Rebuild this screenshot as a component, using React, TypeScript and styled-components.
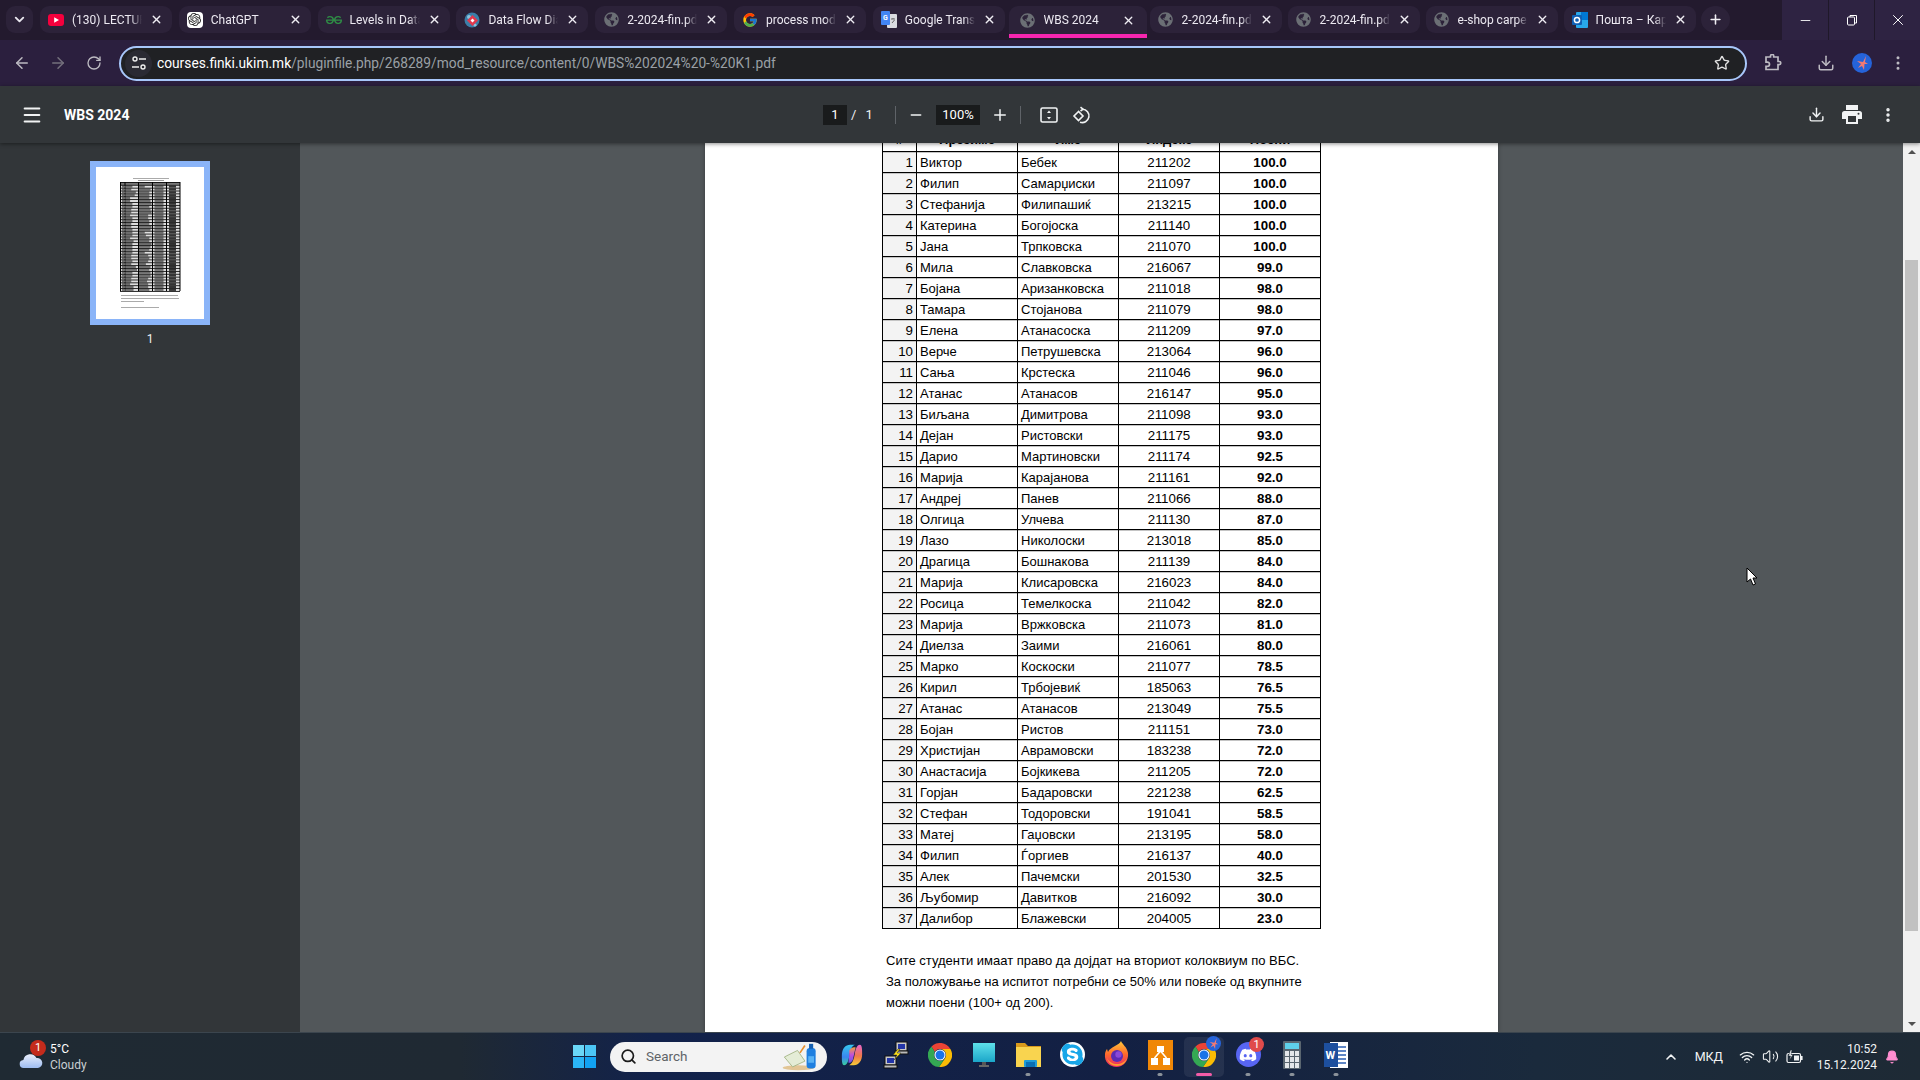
import React from "react";
import styled, { createGlobalStyle } from "styled-components";
import {
  ArrowLeft, ArrowRight, RotateCw, Star, Download, MoreVertical, Menu, Minus, Plus,
  ChevronDown, ChevronUp, X, Search, Wifi, Volume2, Bell,
} from "lucide-react";
import { SiOpenai, SiGeeksforgeeks } from "react-icons/si";
import { FaGlobeAmericas, FaDiscord, FaSkype } from "react-icons/fa";
import { FcGoogle } from "react-icons/fc";

const GlobalStyle = createGlobalStyle`
  html, body { margin: 0; padding: 0; width: 1920px; height: 1080px; overflow: hidden; background: #231a2e; }
  * { box-sizing: border-box; }
  #root { width: 1920px; height: 1080px; }
`;

const UI = `Roboto, "Noto Sans", sans-serif`;

const Shell = styled.div`
  position: relative; width: 1920px; height: 1080px; display: flex; flex-direction: column;
  font-family: ${UI}; overflow: hidden;
`;

/* ---------- tab strip ---------- */
const TabStrip = styled.div`
  height: 40px; flex: none; display: flex; align-items: flex-start; background: #231a2e; padding: 6px 0 0 6px;
`;
const TabMenu = styled.div`
  width: 27px; height: 27px; margin-right: 7px; border-radius: 9px; background: #2c2239; color: #e8e6ee;
  display: flex; align-items: center; justify-content: center;
`;
const TabList = styled.div`display: flex; gap: 6.8px;`;
const Tab = styled.div<{ $active?: boolean }>`
  width: ${p => (p.$active ? "138px" : "132px")}; height: ${p => (p.$active ? "32px" : "27px")};
  margin: ${p => (p.$active ? "0 -3px" : "0")};
  border-radius: ${p => (p.$active ? "9px 9px 0 0" : "9px")};
  background: #2c2239; color: #ece9f1;
  border-bottom: ${p => (p.$active ? "4px solid #f626af" : "none")};
  display: flex; align-items: center; padding: ${p => (p.$active ? "0 12px 0 11px" : "0 9px 0 8px")}; gap: 8px; font-size: 12px;
  &:nth-child(n+9) { margin-left: -0.8px; }
`;
const Fav = styled.span`
  width: 16px; height: 16px; flex: none; display: flex; align-items: center; justify-content: center;
`;
const TabTitle = styled.span`
  flex: 1; min-width: 0; overflow: hidden; white-space: nowrap;
  -webkit-mask-image: linear-gradient(90deg, #000 84%, transparent 100%);
`;
const TabClose = styled(X)`flex: none; color: #f0eef4;`;
const NewTab = styled.div`
  width: 29px; height: 27px; margin-left: 5px; border-radius: 50%; background: #2c2239; color: #f0eef4;
  display: flex; align-items: center; justify-content: center;
`;
const WindowControls = styled.div`
  margin: -6px 0 0 auto; display: flex; height: 40px; background: #2e2342;
`;
const WinBtn = styled.div<{ $sep?: boolean }>`
  width: 46px; height: 40px; display: flex; align-items: center; justify-content: center; color: #fff;
  border-left: ${p => (p.$sep ? "1px solid #1f1829" : "none")};
`;

/* ---------- address bar ---------- */
const Toolbar = styled.div`
  height: 46px; flex: none; display: flex; align-items: center; padding-left: 4px; background: #2b1f3e; color: #c7c7c7;
`;
const ToolBtn = styled.div<{ $dim?: boolean; $gapLeft?: number }>`
  width: 36px; height: 36px; flex: none; display: flex; align-items: center; justify-content: center;
  color: ${p => (p.$dim ? "#74707c" : "#bdbbc2")};
  margin-left: ${p => p.$gapLeft ?? 0}px;
`;
const UrlBar = styled.div`
  width: 1628px; height: 35px; margin-left: 7px; flex: none; background: #202124; border: 2px solid #a8c7fa; border-radius: 18px;
  display: flex; align-items: center; padding: 0 15px 0 4px; font-size: 13.75px;
`;
const SiteChip = styled.div`
  width: 27px; height: 27px; border-radius: 50%; background: #2a2a33; color: #eee; display: flex; align-items: center; justify-content: center; flex: none;
`;
const UrlText = styled.div`margin-left: 5px; flex: 1; color: #9aa0a6; white-space: nowrap;`;
const UrlHost = styled.span`color: #fff;`;
const Avatar = styled.div<{ $s?: number }>`
  width: ${p => p.$s ?? 20}px; height: ${p => p.$s ?? 20}px; border-radius: 50%; background: #2563d9; display: flex; align-items: center; justify-content: center;
`;

/* ---------- pdf toolbar ---------- */
const PdfBar = styled.div`
  height: 57px; flex: none; position: relative; z-index: 2; display: grid; grid-template-columns: 1fr auto 1fr; align-items: center;
  background: #323639; color: #f1f3f4; box-shadow: 0 1px 4px rgba(0,0,0,.45);
`;
const PdfLeft = styled.div`display: flex; align-items: center; gap: 21px; padding-left: 21px;`;
const PdfTitle = styled.div`font-size: 14px; font-weight: 700; color: #fff; padding-top: 1px;`;
const PdfCenter = styled.div`display: flex; align-items: center; font-size: 13px;`;
const PdfInput = styled.div<{ $w: number }>`
  width: ${p => p.$w}px; height: 20px; background: #191b1c; display: flex; align-items: center; justify-content: center; color: #fff;
`;
const PageOf = styled.div`display: flex; gap: 9px; width: 48px; padding-left: 4px; color: #f1f3f4;`;
const Sep = styled.div`width: 1px; height: 18px; background: #5f6368; flex: none;`;
const PdfBtn = styled.div<{ $w?: number }>`
  width: ${p => p.$w ?? 32}px; height: 32px; flex: none; display: flex; align-items: center; justify-content: center; color: #f1f3f4;
`;
const GapFix = styled.div<{ $w: number }>`width: ${p => p.$w}px; flex: none;`;
const PdfRight = styled.div`display: flex; justify-content: flex-end; align-items: center; padding-right: 14px;`;

/* ---------- main ---------- */
const Main = styled.div`height: 889px; flex: none; display: flex; overflow: hidden;`;
const Sidebar = styled.div`
  width: 300px; flex: none; background: #323639; display: flex; flex-direction: column; align-items: center; padding-top: 18px;
`;
const Thumb = styled.div`width: 120px; height: 164px; border: 6px solid #8ab4f8; background: #fff; flex: none;`;
const ThumbNum = styled.div`margin-top: 7px; font-size: 12px; line-height: 14px; color: #eef0f2;`;
const Viewer = styled.div`
  flex: 1; min-width: 0; background: #52575a; display: flex; justify-content: center; overflow: hidden;
`;
const Page = styled.div`
  width: 793px; height: 889px; flex: none; background: #fff; overflow: hidden; padding-left: 177px;
  font-family: "Liberation Sans", Arial, sans-serif; color: #000; font-size: 13.33px;
  box-shadow: 0 0 4px rgba(0,0,0,.35);
`;
const Sheet = styled.table`
  width: 438px; margin-top: -13px; border-collapse: collapse; table-layout: fixed; border: 1px solid #000;
`;
const HCell = styled.th`
  height: 21px; padding: 0 0 3px; border: 1px solid #000; text-align: center; font-weight: 700; background: #fff; font-size: 13px;
`;
const Cell = styled.td<{ $kind: "num" | "name" | "idx" | "pts" }>`
  height: 21px; padding: 1px 3px 0; border: 1px solid #000; line-height: 19px; white-space: nowrap; overflow: hidden;
  box-shadow: inset 0 1px 0 #c4c4c4;
  text-align: ${p => (p.$kind === "num" ? "right" : p.$kind === "name" ? "left" : "center")};
  font-weight: ${p => (p.$kind === "pts" ? 700 : 400)};
  font-size: ${p => (p.$kind === "name" ? "13px" : "13.33px")};
  background: ${p => (p.$kind === "num" ? "#f3f3f3" : "#fff")};
`;
const Note = styled.div`margin: 21px 0 0 4px; line-height: 21px; white-space: nowrap; font-size: 13px;`;
const Scrollbar = styled.div`
  width: 17px; flex: none; background: #f1f1f1; display: flex; flex-direction: column; align-items: center;
`;
const ScrollArrow = styled.div<{ $down?: boolean }>`
  width: 17px; height: 17px; flex: none; display: flex; align-items: center; justify-content: center;
  margin-top: ${p => (p.$down ? "auto" : "0")};
  &::after {
    content: ""; border-left: 4px solid transparent; border-right: 4px solid transparent;
    ${p => (p.$down ? "border-top: 4px solid #505050;" : "border-bottom: 4px solid #505050;")}
  }
`;
const ScrollThumb = styled.div`width: 13px; height: 671px; margin-top: 100px; background: #c1c1c1; flex: none;`;

/* ---------- taskbar ---------- */
const Taskbar = styled.div`
  height: 48px; flex: none; display: flex; align-items: center; padding-left: 19px; color: #fff;
  border-top: 1px solid #3b454e;
  background: linear-gradient(90deg, #1f2a33 0%, #1f2933 24%, #12224b 34%, #132043 58%, #1a2a3c 80%, #1e2a35 100%);
`;
const Weather = styled.div`width: 554px; flex: none; display: flex; align-items: center; gap: 7px;`;
const WeatherIcon = styled.div`position: relative; width: 24px; height: 24px; flex: none; display: flex; align-items: flex-end;`;
const Badge = styled.span`
  position: absolute; right: -3px; top: -5px; width: 16px; height: 16px; border-radius: 50%; background: #c42b1c; color: #fff;
  font-size: 11px; line-height: 16px; text-align: center;
`;
const WeatherText = styled.div`font-size: 12px; line-height: 16px;`;
const WeatherSub = styled.div`color: #c9ced2;`;
const StartBtn = styled.div`
  width: 23px; height: 23px; flex: none; margin-right: 14px; display: grid; grid-template-columns: 1fr 1fr; gap: 1px;
`;
const StartPane = styled.span<{ $c: string }>`background: ${p => p.$c};`;
const SearchBox = styled.div`
  width: 217px; height: 30px; flex: none; margin-right: 3px; background: #f3f3f3; border-radius: 15px; display: flex; align-items: center;
  padding: 0 5px 2px 10px; color: #5f6468; font-size: 13.5px; gap: 9px;
`;
const SearchIcon = styled(Search)`color: #1b1b1b; flex: none; margin-top: 2px;`;
const SearchArt = styled.svg`margin-left: auto; flex: none; margin-top: 2px;`;
const TaskIcon = styled.div<{ $active?: boolean }>`
  position: relative; width: 44px; height: 40px; flex: none; display: flex; align-items: center; justify-content: center;
  &::before {
    content: ""; position: absolute; left: 2px; right: 2px; top: 0; bottom: 0; border-radius: 5px;
    background: ${p => (p.$active ? "rgba(255,255,255,.07)" : "transparent")};
  }
`;
const TaskGlyph = styled.div`position: relative; width: 26px; height: 26px; display: flex; align-items: center; justify-content: center; margin-top: -4px;`;
const RunDot = styled.span<{ $active?: boolean }>`
  position: absolute; bottom: 1px; left: 50%; transform: translateX(-50%); height: 3px; border-radius: 2px;
  width: ${p => (p.$active ? "16px" : "5px")}; background: ${p => (p.$active ? "#f45ca8" : "#8b929a")};
`;
const MiniBadge = styled.span`
  position: absolute; right: -3px; top: -5px; width: 15px; height: 15px; border-radius: 50%; background: #e04b4b; color: #fff;
  font-size: 11px; line-height: 15px; text-align: center;
`;
const ProfileBadge = styled.span`position: absolute; right: -4px; top: -6px;`;
const Tray = styled.div`flex: 1; display: flex; align-items: center; justify-content: flex-end; padding-right: 21px; font-size: 12px; color: #f2f4f5;`;
const TrayLang = styled.div`margin: 0 16px 0 16px; font-size: 12.5px;`;
const TrayIcons = styled.div`display: flex; align-items: center; gap: 7px;`;
const Clock = styled.div`width: 74px; margin-right: 8px; text-align: right; line-height: 16px; font-size: 12px;`;
const BellIcon = styled(Bell)`flex: none; color: #ff8dd0; fill: #ff8dd0;`;
const Cursor = styled.svg`position: absolute; left: 1746px; top: 567px; z-index: 5;`;

/* ---------- drawings ---------- */
const Chrome = ({ s = 16 }: { s?: number }) => (
  <svg width={s} height={s} viewBox="0 0 24 24">
    <path d="M3.5 3.5A12 12 0 0 1 22.39 6H12a6 6 0 0 0-5.2 3z" fill="#ea4335" />
    <path d="M22.39 6A12 12 0 0 1 11 24l6.2-9A6 6 0 0 0 12 6z" fill="#fbbc04" />
    <path d="M3.5 3.5A12 12 0 0 0 11 24l6.2-9a6 6 0 0 1-10.4-6z" fill="#34a853" />
    <circle cx="12" cy="12" r="5.6" fill="#fff" />
    <circle cx="12" cy="12" r="4.5" fill="#1a73e8" />
  </svg>
);
const Globe = () => <FaGlobeAmericas size={15} color="#6b6f75" />;
const YouTube = () => (
  <svg width="16" height="12" viewBox="0 0 16 12"><rect width="16" height="12" rx="3" fill="#f5003d" /><path d="M6.2 3.3 11 6 6.2 8.7z" fill="#fff" /></svg>
);
const GptIcon = () => (
  <span style={{ width: 16, height: 16, background: "#fff", borderRadius: 4, display: "flex", alignItems: "center", justifyContent: "center" }}>
    <SiOpenai size={13} color="#222" />
  </span>
);
const DataFlow = () => (
  <svg width="16" height="16" viewBox="0 0 16 16">
    <circle cx="8" cy="8" r="7.5" fill="#3b7ea8" />
    <circle cx="5" cy="5" r="2" fill="#8cc3de" /><circle cx="11" cy="13" r="1.6" fill="#8cc3de" />
    <path d="M8.5 3 14 8.5 8.5 14 3 8.5z" fill="#e2384d" /><path d="M8.5 6.5 10.5 8.5 8.5 10.5 6.5 8.5z" fill="#fff" />
  </svg>
);
const Translate = () => (
  <svg width="16" height="18" viewBox="0 0 16 18">
    <rect x="6" y="3" width="10" height="14" rx="1" fill="#dadce0" />
    <rect x="0" y="0" width="9" height="14" rx="1" fill="#4285f4" />
    <text x="2" y="9" fontSize="7" fontWeight="700" fill="#fff" fontFamily="Roboto">G</text>
    <path d="M10 8h4M12 7v1M11 12l2.5-3" stroke="#666" fill="none" />
  </svg>
);
const Outlook = ({ s = 16 }: { s?: number }) => (
  <svg width={s} height={s} viewBox="0 0 16 16">
    <rect x="4" y="0" width="12" height="16" rx="1" fill="#28a8ea" />
    <rect x="9" y="0" width="7" height="8" fill="#0078d4" />
    <rect x="0" y="3" width="10" height="10" rx="1" fill="#0f5fb3" />
    <circle cx="5" cy="8" r="2.6" fill="none" stroke="#fff" strokeWidth="1.5" />
  </svg>
);
const Tune = () => (
  <svg width="16" height="16" viewBox="0 0 16 16" fill="none" stroke="#eee" strokeWidth="1.4">
    <circle cx="4" cy="4" r="2" /><path d="M8 4h7M1 12h7" /><circle cx="12" cy="12" r="2" />
  </svg>
);
const Extension = () => (
  <svg width="18" height="18" viewBox="0 0 18 18" fill="none" stroke="#bdbbc2" strokeWidth="1.7">
    <path d="M2 3h4.5V2a1.6 1.6 0 0 1 3.2 0v1H14v4.5h1.2a1.6 1.6 0 0 1 0 3.2H14V15.5H2v-3.2h1.4a2 2 0 0 0 0-4.2H2z" />
  </svg>
);
const Butterfly = ({ s = 14 }: { s?: number }) => (
  <svg width={s} height={s} viewBox="0 0 14 14">
    <path d="M11 0 8 6 2 5l4 3-3 4 4-2 2 4 .5-6L13 8 10 6z" fill="#f47a72" />
  </svg>
);
const FitIcon = () => (
  <svg width="18" height="18" viewBox="0 0 18 18" fill="none">
    <rect x="1" y="2" width="16" height="14" rx="1.5" stroke="#f1f3f4" strokeWidth="1.6" />
    <path d="M9 4.5 11 7H7zM9 13.5 7 11h4z" fill="#f1f3f4" />
  </svg>
);
const RotateIcon = () => (
  <svg width="20" height="20" viewBox="0 0 20 20" fill="none" stroke="#f1f3f4" strokeWidth="1.6">
    <path d="M9.5 2.2 12 4.2 9.5 6" /><path d="M11.5 4.2a6.7 6.7 0 1 1-2.5 13" />
    <path d="M7.5 6.5 3 11l4.5 4.5L12 11z" />
  </svg>
);
const PrintIcon = () => (
  <svg width="20" height="19" viewBox="0 0 20 19">
    <rect x="4" y="0" width="12" height="5" fill="#f1f3f4" />
    <path d="M2.5 6h15A2.5 2.5 0 0 1 20 8.5V14h-4v5H4v-5H0V8.5A2.5 2.5 0 0 1 2.5 6z" fill="#f1f3f4" />
    <rect x="6" y="11" width="8" height="6" fill="#323639" />
    <circle cx="16.5" cy="8.8" r="1" fill="#323639" />
  </svg>
);
const BatteryIcon = () => (
  <svg width="17" height="14" viewBox="0 0 17 14" fill="none">
    <rect x="1" y="3.5" width="13.5" height="9" rx="1.5" stroke="#f2f4f5" strokeWidth="1.2" />
    <rect x="8" y="5.5" width="5" height="5" fill="#f2f4f5" />
    <rect x="15" y="6" width="1.6" height="4" fill="#f2f4f5" />
    <path d="M4.5 0 2.5 6h2l-1 4 3.5-5.5H5L6 0z" fill="#f2f4f5" stroke="#1e2a35" strokeWidth=".5" />
  </svg>
);
const Cloud = () => (
  <svg width="24" height="18" viewBox="0 0 24 18">
    <defs><linearGradient id="cl" x1="0" y1="0" x2="0" y2="1"><stop offset="0" stopColor="#e9eefb" /><stop offset="1" stopColor="#9dbcf0" /></linearGradient></defs>
    <path d="M5 17a4 4 0 0 1-.6-8A7 7 0 0 1 17.5 7 5 5 0 0 1 19 17z" fill="url(#cl)" />
  </svg>
);
const SearchPicture = () => (
  <SearchArt width="44" height="28" viewBox="0 0 44 34">
    <ellipse cx="20" cy="30" rx="19" ry="3" fill="#e2c595" />
    <path d="M3 17 19 9l9 13-15 7z" fill="#e4ecd6" stroke="#9db07e" />
    <path d="M22 12 28 3" stroke="#e8902e" strokeWidth="2" />
    <rect x="30" y="6" width="11" height="25" rx="4" fill="#1f7fe0" />
    <rect x="33" y="1" width="5" height="6" fill="#155fb0" />
    <rect x="32" y="16" width="7" height="8" fill="#59b2f5" />
  </SearchArt>
);
const Copilot = () => (
  <svg width="24" height="24" viewBox="0 0 26 26">
    <defs>
      <linearGradient id="c1" x1="0" y1="0" x2="0" y2="1"><stop offset="0" stopColor="#35c7ee" /><stop offset=".6" stopColor="#3a86f0" /><stop offset="1" stopColor="#39d0a0" /></linearGradient>
      <linearGradient id="c2" x1="0" y1="0" x2="0" y2="1"><stop offset="0" stopColor="#e765c9" /><stop offset=".55" stopColor="#f0784a" /><stop offset="1" stopColor="#f5c938" /></linearGradient>
      <linearGradient id="c3" x1="0" y1="0" x2="0" y2="1"><stop offset="0" stopColor="#f0a03a" /><stop offset=".5" stopColor="#c04fdc" /><stop offset="1" stopColor="#6a52e8" /></linearGradient>
    </defs>
    <path d="M2 14C2 6 6 2 11 2h5c-4 2-5 7-6 12-1 7-3 10-5.5 10S2 19 2 14z" fill="url(#c1)" />
    <path d="M24 12c0 8-4 12-9 12h-5c4-2 5-7 6-12 1-7 3-10 5.5-10S24 7 24 12z" fill="url(#c2)" />
    <path d="M10 8c2-3 5-4 7-3-1 3-2 9-3 13-1 3-3 4-5 3 1-4 1-9 1-13z" fill="url(#c3)" />
  </svg>
);
const Putty = () => (
  <svg width="26" height="28" viewBox="0 0 26 28">
    <rect x="13" y="1" width="11" height="9" fill="#c9c9c9" stroke="#111" /><rect x="15" y="3" width="7" height="5" fill="#2335a8" />
    <rect x="12" y="10" width="13" height="3" fill="#bbb" stroke="#111" />
    <rect x="2" y="15" width="11" height="9" fill="#c9c9c9" stroke="#111" /><rect x="4" y="17" width="7" height="5" fill="#2335a8" />
    <rect x="1" y="24" width="13" height="3" fill="#bbb" stroke="#111" />
    <path d="M15 8 10 14h4l-3 5 7-7h-4l3-4z" fill="#ffe21a" stroke="#222" strokeWidth=".5" />
  </svg>
);
const Monitor = () => (
  <svg width="22" height="24" viewBox="0 0 22 24">
    <defs><linearGradient id="m1" x1="0" y1="0" x2="0" y2="1"><stop offset="0" stopColor="#5ee0ea" /><stop offset="1" stopColor="#1ba6c9" /></linearGradient></defs>
    <rect x="0" y="0" width="22" height="19" fill="url(#m1)" /><rect x="9" y="19" width="4" height="3" fill="#555" /><rect x="6" y="22" width="10" height="2" fill="#666" />
  </svg>
);
const Folder = () => (
  <svg width="25" height="28" viewBox="0 0 25 28">
    <path d="M0 2h9l3 3h13v4H0z" fill="#d99a1c" /><rect x="0" y="6" width="25" height="20" fill="#f9d44f" /><rect x="8" y="19" width="13" height="7" rx="1" fill="#1f9bd8" /><rect x="10" y="21" width="9" height="5" fill="#0b6fb5" />
  </svg>
);
const Skype = () => <FaSkype size={25} color="#18a6e8" style={{ background: "#fff", borderRadius: "50%" }} />;
const Firefox = () => (
  <svg width="25" height="27" viewBox="0 0 25 27">
    <defs>
      <linearGradient id="f1" x1="0" y1="0" x2="0" y2="1"><stop offset="0" stopColor="#ffc93a" /><stop offset=".5" stopColor="#ff6a2b" /><stop offset="1" stopColor="#e8276b" /></linearGradient>
    </defs>
    <path d="M17 0c1 3 6 6 7 12 1 8-5 14-11.500 14S0 21 1 13c.3-2 1-4 2-5l1 3c1-3 4-4 7-6 3-1.500 5-3 6-5z" fill="url(#f1)" />
    <circle cx="13" cy="15" r="6" fill="#5b2bb5" />
    <circle cx="14.500" cy="13.500" r="3.200" fill="#8a48d8" />
    <path d="M3 17c1 5 5 8 10 8s9-3 10-8c-2 4-6 6-10 6s-8-2-10-6z" fill="#ff9a2e" />
  </svg>
);
const Orange = () => (
  <svg width="25" height="30" viewBox="0 0 25 30">
    <rect width="25" height="30" fill="#f08707" />
    <g fill="#fff"><rect x="9" y="6" width="7" height="6" /><rect x="3" y="18" width="7" height="7" /><rect x="15" y="18" width="7" height="7" /></g>
    <path d="M12.5 11 6.5 18M12.5 11l6 7" stroke="#fff" strokeWidth="1.6" />
  </svg>
);
const Discord = () => (
  <span style={{ width: 25, height: 25, borderRadius: "50%", background: "#5865f2", display: "flex", alignItems: "center", justifyContent: "center" }}>
    <FaDiscord size={18} color="#fff" />
  </span>
);
const Calc = () => (
  <svg width="18" height="28" viewBox="0 0 18 28">
    <rect width="18" height="28" rx="1" fill="#5a6670" /><rect x="2" y="2" width="14" height="6" fill="#5fd0ea" />
    {[0, 1, 2].map(c => [0, 1, 2].map(r => <rect key={`${c}${r}`} x={2 + c * 5} y={10 + r * 6} width="4" height="5" fill="#e4e7ea" />))}
  </svg>
);
const Word = () => (
  <svg width="24" height="28" viewBox="0 0 24 28">
    <rect x="6" y="1" width="18" height="26" fill="#fff" />
    <path d="M13 6h9M13 10h9M13 14h9M13 18h9M13 22h9" stroke="#2b5fb3" strokeWidth="1.6" />
    <rect x="0" y="2" width="14" height="24" fill="#1d4f9e" />
    <text x="1.5" y="18" fontSize="11" fontWeight="700" fill="#fff" fontFamily="Roboto">W</text>
  </svg>
);

/* ---------- data ---------- */
const tabs: { title: string; icon: React.ReactNode; active?: boolean }[] = [
  { title: "(130) LECTURE", icon: <YouTube /> },
  { title: "ChatGPT", icon: <GptIcon /> },
  { title: "Levels in Data", icon: <SiGeeksforgeeks size={16} color="#2f8d46" /> },
  { title: "Data Flow Dia", icon: <DataFlow /> },
  { title: "2-2024-fin.pdf", icon: <Globe /> },
  { title: "process mode", icon: <FcGoogle size={16} /> },
  { title: "Google Transl", icon: <Translate /> },
  { title: "WBS 2024", icon: <Globe />, active: true },
  { title: "2-2024-fin.pdf", icon: <Globe /> },
  { title: "2-2024-fin.pdf", icon: <Globe /> },
  { title: "e-shop carpe", icon: <Globe /> },
  { title: "Пошта – Кар", icon: <Outlook /> },
];

const students: [string, string, string, string][] = [
  ["Виктор", "Бебек", "211202", "100.0"], ["Филип", "Самарџиски", "211097", "100.0"],
  ["Стефанија", "Филипашиќ", "213215", "100.0"], ["Катерина", "Богојоска", "211140", "100.0"],
  ["Јана", "Трпковска", "211070", "100.0"], ["Мила", "Славковска", "216067", "99.0"],
  ["Бојана", "Аризанковска", "211018", "98.0"], ["Тамара", "Стојанова", "211079", "98.0"],
  ["Елена", "Атанасоска", "211209", "97.0"], ["Верче", "Петрушевска", "213064", "96.0"],
  ["Сања", "Крстеска", "211046", "96.0"], ["Атанас", "Атанасов", "216147", "95.0"],
  ["Биљана", "Димитрова", "211098", "93.0"], ["Дејан", "Ристовски", "211175", "93.0"],
  ["Дарио", "Мартиновски", "211174", "92.5"], ["Марија", "Карајанова", "211161", "92.0"],
  ["Андреј", "Панев", "211066", "88.0"], ["Олгица", "Улчева", "211130", "87.0"],
  ["Лазо", "Николоски", "213018", "85.0"], ["Драгица", "Бошнакова", "211139", "84.0"],
  ["Марија", "Клисаровска", "216023", "84.0"], ["Росица", "Темелкоска", "211042", "82.0"],
  ["Марија", "Вржковска", "211073", "81.0"], ["Диелза", "Заими", "216061", "80.0"],
  ["Марко", "Коскоски", "211077", "78.5"], ["Кирил", "Трбојевиќ", "185063", "76.5"],
  ["Атанас", "Атанасов", "213049", "75.5"], ["Бојан", "Ристов", "211151", "73.0"],
  ["Христијан", "Аврамовски", "183238", "72.0"], ["Анастасија", "Бојкикева", "211205", "72.0"],
  ["Горјан", "Бадаровски", "221238", "62.5"], ["Стефан", "Тодоровски", "191041", "58.5"],
  ["Матеј", "Гаџовски", "213195", "58.0"], ["Филип", "Ѓоргиев", "216137", "40.0"],
  ["Алек", "Пачемски", "201530", "32.5"], ["Љубомир", "Давитков", "216092", "30.0"],
  ["Далибор", "Блажевски", "204005", "23.0"],
];

const ThumbPic = () => (
  <svg width="108" height="152" viewBox="0 0 108 152" style={{ display: "block" }}>
    <rect x="37" y="11" width="36" height="1" fill="#aaa" /><rect x="42" y="13" width="26" height="1" fill="#999" />
    <rect x="24" y="15" width="60" height="109" fill="#ddd" />
    <rect x="24" y="15" width="60" height="3" fill="#777" />
    {students.map((s, i) => {
      const y = 18.6 + i * 2.87;
      return (
        <g key={i} fill="#6e6e6e">
          <rect x="26" y={y} width="2" height="2" />
          <rect x="29.500" y={y} width={Math.min(12, s[0].length * 1.15)} height="2" />
          <rect x="43" y={y} width={Math.min(12.5, s[1].length * 1.15)} height="2" />
          <rect x="58.500" y={y} width="9" height="2" />
          <rect x="73" y={y} width="7" height="2" fill="#333" />
        </g>
      );
    })}
    {Array.from({ length: 39 }, (_, i) => <rect key={i} x="24" y={15 + i * 2.87} width="60" height=".8" fill="#000" />)}
    {[24, 28.5, 42, 56, 70, 83.5].map(x => <rect key={x} x={x} y="15" width="1" height="109" fill="#000" />)}
    <rect x="25" y="128" width="57" height="1" fill="#aaa" /><rect x="25" y="131" width="58" height="1" fill="#aaa" />
    <rect x="25" y="134" width="23" height="1" fill="#aaa" /><rect x="25" y="140" width="38" height="1" fill="#aaa" />
  </svg>
);

const taskIcons: { node: React.ReactNode; dot?: boolean; active?: boolean; badge?: boolean; profile?: boolean }[] = [
  { node: <Copilot /> }, { node: <Putty /> }, { node: <Chrome s={24} /> }, { node: <Monitor /> },
  { node: <Folder />, dot: true }, { node: <Skype /> }, { node: <Firefox /> }, { node: <Orange />, dot: true },
  { node: <Chrome s={24} />, dot: true, active: true, profile: true }, { node: <Discord />, dot: true, badge: true },
  { node: <Calc />, dot: true }, { node: <Word />, dot: true },
];

export default function App() {
  return (
    <Shell>
      <GlobalStyle />
      <TabStrip>
        <TabMenu><ChevronDown size={15} strokeWidth={3} /></TabMenu>
        <TabList>
          {tabs.map((t, i) => (
            <Tab key={i} $active={t.active}>
              <Fav>{t.icon}</Fav>
              <TabTitle>{t.title}</TabTitle>
              <TabClose size={13} strokeWidth={2.5} />
            </Tab>
          ))}
        </TabList>
        <NewTab><Plus size={15} strokeWidth={2.5} /></NewTab>
        <WindowControls>
          <WinBtn><Minus size={15} strokeWidth={1.4} /></WinBtn>
          <WinBtn $sep>
            <svg width="12" height="12" viewBox="0 0 12 12" fill="none" stroke="#fff"><rect x="1.5" y="3" width="7" height="8" rx="1" /><path d="M4 3V1.5h6.5V9H9" /></svg>
          </WinBtn>
          <WinBtn $sep><X size={18} strokeWidth={1.3} /></WinBtn>
        </WindowControls>
      </TabStrip>

      <Toolbar>
        <ToolBtn><ArrowLeft size={18} /></ToolBtn>
        <ToolBtn $dim><ArrowRight size={18} /></ToolBtn>
        <ToolBtn><RotateCw size={16} /></ToolBtn>
        <UrlBar>
          <SiteChip><Tune /></SiteChip>
          <UrlText><UrlHost>courses.finki.ukim.mk</UrlHost>/pluginfile.php/268289/mod_resource/content/0/WBS%202024%20-%20K1.pdf</UrlText>
          <Star size={16} color="#e3e3e3" />
        </UrlBar>
        <ToolBtn $gapLeft={8}><Extension /></ToolBtn>
        <ToolBtn $gapLeft={17}><Download size={18} /></ToolBtn>
        <ToolBtn><Avatar><Butterfly /></Avatar></ToolBtn>
        <ToolBtn><MoreVertical size={18} /></ToolBtn>
      </Toolbar>

      <PdfBar>
        <PdfLeft>
          <Menu size={22} strokeWidth={2.2} />
          <PdfTitle>WBS 2024</PdfTitle>
        </PdfLeft>
        <PdfCenter>
          <PdfInput $w={24}>1</PdfInput>
          <PageOf><span>/</span><span>1</span></PageOf>
          <Sep />
          <GapFix $w={4} />
          <PdfBtn><Minus size={16} strokeWidth={2.4} /></PdfBtn>
          <GapFix $w={4} />
          <PdfInput $w={44}>100%</PdfInput>
          <GapFix $w={4} />
          <PdfBtn><Plus size={18} strokeWidth={2} /></PdfBtn>
          <GapFix $w={4} />
          <Sep />
          <GapFix $w={12} />
          <PdfBtn><FitIcon /></PdfBtn>
          <PdfBtn><RotateIcon /></PdfBtn>
        </PdfCenter>
        <PdfRight>
          <PdfBtn $w={36}><Download size={17} /></PdfBtn>
          <PdfBtn $w={36}><PrintIcon /></PdfBtn>
          <PdfBtn $w={36}><MoreVertical size={18} strokeWidth={2.6} /></PdfBtn>
        </PdfRight>
      </PdfBar>

      <Main>
        <Sidebar>
          <Thumb><ThumbPic /></Thumb>
          <ThumbNum>1</ThumbNum>
        </Sidebar>
        <Viewer>
          <Page>
            <Sheet>
              <colgroup>
                <col style={{ width: 34 }} /><col style={{ width: 101 }} /><col style={{ width: 101 }} /><col style={{ width: 101 }} /><col style={{ width: 101 }} />
              </colgroup>
              <thead>
                <tr>
                  <HCell>#</HCell><HCell>Презиме</HCell><HCell>Име</HCell><HCell>Индекс</HCell><HCell>Поени</HCell>
                </tr>
              </thead>
              <tbody>
                {students.map((s, i) => (
                  <tr key={i}>
                    <Cell $kind="num">{i + 1}</Cell>
                    <Cell $kind="name">{s[0]}</Cell>
                    <Cell $kind="name">{s[1]}</Cell>
                    <Cell $kind="idx">{s[2]}</Cell>
                    <Cell $kind="pts">{s[3]}</Cell>
                  </tr>
                ))}
              </tbody>
            </Sheet>
            <Note>
              Сите студенти имаат право да дојдат на вториот колоквиум по ВБС.<br />
              За положување на испитот потребни се 50% или повеќе од вкупните<br />
              можни поени (100+ од 200).
            </Note>
          </Page>
        </Viewer>
        <Scrollbar>
          <ScrollArrow />
          <ScrollThumb />
          <ScrollArrow $down />
        </Scrollbar>
      </Main>

      <Taskbar>
        <Weather>
          <WeatherIcon><Cloud /><Badge>1</Badge></WeatherIcon>
          <WeatherText>5°C<WeatherSub>Cloudy</WeatherSub></WeatherText>
        </Weather>
        <StartBtn>
          <StartPane $c="#6ad7f7" /><StartPane $c="#4cc6f5" /><StartPane $c="#2bb5f5" /><StartPane $c="#12a2f2" />
        </StartBtn>
        <SearchBox>
          <SearchIcon size={17} strokeWidth={2.4} />
          Search
          <SearchPicture />
        </SearchBox>
        {taskIcons.map((t, i) => (
          <TaskIcon key={i} $active={t.active}>
            <TaskGlyph>
              {t.node}
              {t.badge && <MiniBadge>1</MiniBadge>}
              {t.profile && <ProfileBadge><Avatar $s={15}><Butterfly s={11} /></Avatar></ProfileBadge>}
            </TaskGlyph>
            {t.dot && <RunDot $active={t.active} />}
          </TaskIcon>
        ))}
        <Tray>
          <ChevronUp size={16} strokeWidth={2.4} />
          <TrayLang>МКД</TrayLang>
          <TrayIcons>
            <Wifi size={16} />
            <Volume2 size={17} strokeWidth={1.5} />
            <BatteryIcon />
          </TrayIcons>
          <Clock>10:52<br />15.12.2024</Clock>
          <BellIcon size={14} />
        </Tray>
      </Taskbar>

      <Cursor width="14" height="20" viewBox="0 0 14 20">
        <path d="M1 1v14l3.5-3 2.5 6 2.5-1-2.5-6H11z" fill="#fff" stroke="#000" strokeWidth="1" />
      </Cursor>
    </Shell>
  );
}
